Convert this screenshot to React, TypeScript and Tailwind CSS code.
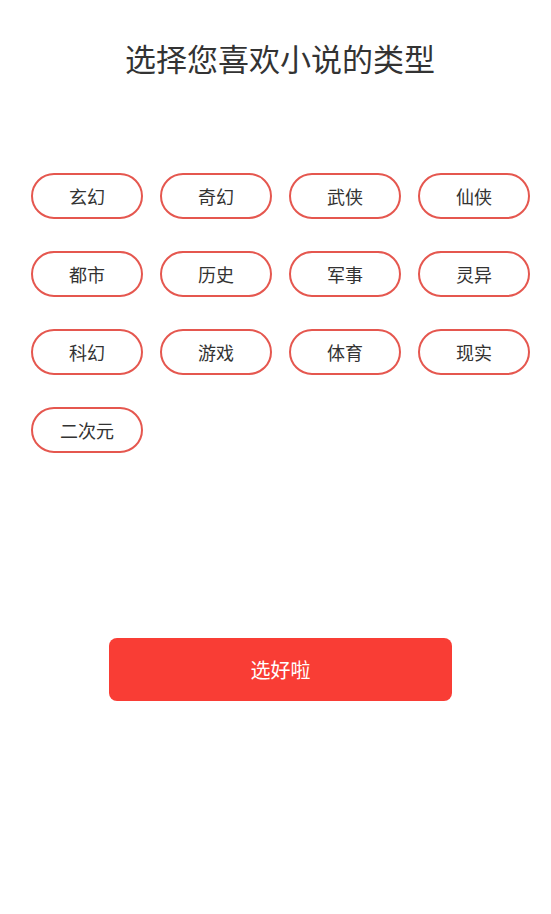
import React from "react";

const tags = ["玄幻","奇幻","武侠","仙侠","都市","历史","军事","灵异","科幻","游戏","体育","现实","二次元"];

export default function App() {
  return (
    <div className="w-[551px] h-[914px] bg-white flex flex-col" style={{ fontFamily: '"Noto Sans CJK SC", "Noto Sans", sans-serif' }}>
      <h1 className="mt-[36px] h-[44px] leading-[44px] text-center text-[31px] text-[#333333] font-normal pl-[9px]">选择您喜欢小说的类型</h1>
      <div className="mt-[93px] pl-[31px] grid grid-cols-[repeat(4,112px)] gap-x-[17px] gap-y-[32px]">
        {tags.map(t => (
          <div key={t} className="h-[46px] rounded-full border-2 border-[#e5574f] flex items-center justify-center text-[18px] text-[#333333]">{t}</div>
        ))}
      </div>
      <div className="mt-[185px] flex justify-center pl-[10px]">
        <button className="w-[343px] h-[63px] rounded-[8px] bg-[#f93d35] text-white text-[20px]">选好啦</button>
      </div>
    </div>
  );
}
